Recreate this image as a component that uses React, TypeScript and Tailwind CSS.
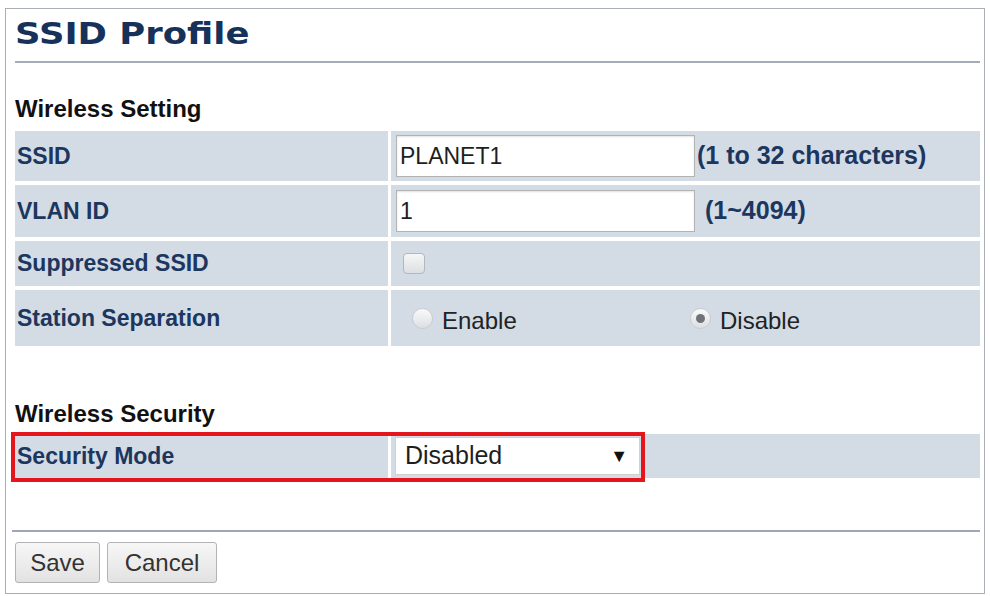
import React from "react";

const sans = { fontFamily: '"Liberation Sans", Arial, sans-serif' };

function Row({
  label,
  h,
  children,
}: {
  label: string;
  h: string;
  children?: React.ReactNode;
}) {
  return (
    <div className={`flex gap-[3px] ${h}`}>
      <div className="w-[373px] shrink-0 bg-[#d3dbe5] flex items-center pl-[2px] text-[23px] font-bold text-[#1c365e]">
        {label}
      </div>
      <div className="flex-1 bg-[#d3dbe5] flex items-center">{children}</div>
    </div>
  );
}

function TextBox({ value }: { value: string }) {
  return (
    <div className="ml-[5px] w-[299px] h-[42px] bg-white border border-[#b3b3b3] shadow-[inset_0_1px_2px_rgba(0,0,0,0.12)] flex items-center pl-[3px] text-[23px] text-[#1e1e1e]">
      {value}
    </div>
  );
}

function Radio({ checked }: { checked?: boolean }) {
  return (
    <span className="w-[21px] h-[21px] rounded-full border border-[#c9ccd1] bg-gradient-to-b from-[#fafafa] to-[#dcdfe3] flex items-center justify-center">
      {checked && <span className="w-[9px] h-[9px] rounded-full bg-[#6f7276]" />}
    </span>
  );
}

export default function App() {
  return (
    <div className="bg-white w-[990px] h-[596px] pt-[8px] pl-[5px] overflow-hidden" style={sans}>
      <div className="w-[980px] h-[586px] border border-[#a9aeb5] pl-[9px] pr-[4px] pt-[5px]">
        <h1
          className="w-fit text-[30px] leading-[40px] font-bold text-[#16325a] scale-x-[1.18] origin-left"
          style={{ fontFamily: '"DejaVu Sans", Verdana, sans-serif' }}
        >
          SSID Profile
        </h1>
        <div className="mt-[7px] h-[2px] bg-[#a4acba]" />

        <div className="mt-[32px] text-[24px] leading-[28px] font-bold text-[#111]">
          Wireless Setting
        </div>

        <div className="mt-[8px] flex flex-col gap-[4px]">
          <Row label="SSID" h="h-[50px]">
            <TextBox value="PLANET1" />
            <span className="ml-[2px] text-[25px] font-bold text-[#1c365e]">
              (1 to 32 characters)
            </span>
          </Row>
          <Row label="VLAN ID" h="h-[52px]">
            <TextBox value="1" />
            <span className="ml-[10px] text-[25px] font-bold text-[#1c365e]">(1~4094)</span>
          </Row>
          <Row label="Suppressed SSID" h="h-[45px]">
            <span className="ml-[12px] w-[22px] h-[21px] rounded-[4px] border border-[#b4b7bc] bg-gradient-to-b from-[#f6f6f6] to-[#dcdfe3]" />
          </Row>
          <Row label="Station Separation" h="h-[56px]">
            <div className="ml-[21px] w-[278px] flex items-center gap-[9px]">
              <Radio />
              <span className="text-[24px] text-[#222] mt-[6px]">Enable</span>
            </div>
            <div className="flex items-center gap-[9px]">
              <Radio checked />
              <span className="text-[24px] text-[#222] mt-[6px]">Disable</span>
            </div>
          </Row>
        </div>

        <div className="mt-[54px] text-[24px] leading-[28px] font-bold text-[#111]">
          Wireless Security
        </div>

        <div className="relative mt-[6px]">
          <Row label="Security Mode" h="h-[44px]">
            <div className="ml-[4px] w-[245px] h-[38px] bg-white border border-[#d0d0d0] flex items-center justify-between pl-[9px] pr-[11px] text-[25px] text-[#1e1e1e]">
              <span>Disabled</span>
              <span className="text-[18px] text-[#111]">▼</span>
            </div>
          </Row>
          <div className="absolute left-[-4px] top-[-2px] w-[634px] h-[50px] border-[4px] border-[#e3161d] pointer-events-none" />
        </div>

        <div className="mt-[52px] ml-[-3px] h-[2px] bg-[#9ea6bc]" />

        <div className="mt-[10px] flex gap-[7px]">
          <button className="w-[85px] h-[41px] rounded-[3px] border border-[#b3b3b3] bg-gradient-to-b from-[#f7f7f7] to-[#e2e2e2] text-[24px] text-[#333]">
            Save
          </button>
          <button className="w-[110px] h-[41px] rounded-[3px] border border-[#b3b3b3] bg-gradient-to-b from-[#f7f7f7] to-[#e2e2e2] text-[24px] text-[#333]">
            Cancel
          </button>
        </div>
      </div>
    </div>
  );
}
